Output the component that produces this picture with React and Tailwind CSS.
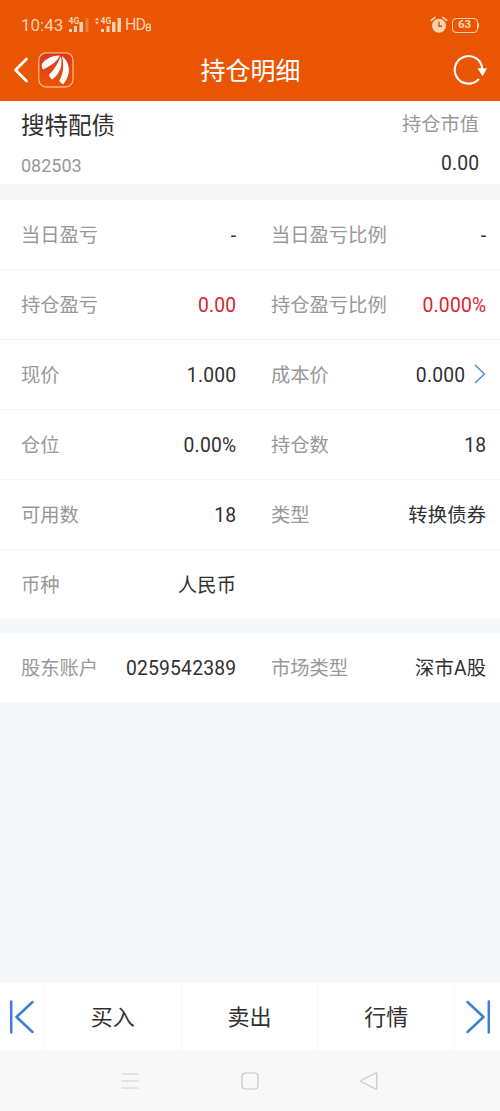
import React from 'react';
import clsx from 'clsx';

const rows = [
  [
    { label: '当日盈亏', value: '-' },
    { label: '当日盈亏比例', value: '-' },
  ],
  [
    { label: '持仓盈亏', value: '0.00', red: true },
    { label: '持仓盈亏比例', value: '0.000%', red: true },
  ],
  [
    { label: '现价', value: '1.000' },
    { label: '成本价', value: '0.000', link: true },
  ],
  [
    { label: '仓位', value: '0.00%' },
    { label: '持仓数', value: '18' },
  ],
  [
    { label: '可用数', value: '18' },
    { label: '类型', value: '转换债券' },
  ],
  [{ label: '币种', value: '人民币' }],
];

const accountRow = [
  { label: '股东账户', value: '0259542389' },
  { label: '市场类型', value: '深市A股' },
];

const StatusBar = () => (
  <div className="flex h-[50px] items-center justify-between pl-[21px] pr-[21px] text-[#ffd2b0]">
    <div className="flex items-center">
      <span className="w-[42px] text-[17px] leading-[20px]">10:43</span>
      <svg className="ml-[5px]" width="55" height="18" viewBox="0 0 55 18" fill="currentColor">
        <text x="0.5" y="7.5" fontSize="8.5" fontWeight="700">4G</text>
        <rect x="1" y="13" width="3" height="3" />
        <rect x="6" y="10" width="3" height="6" />
        <rect x="11.5" y="6" width="3.5" height="10" />
        <rect x="17.5" y="2" width="3" height="14" opacity="0.35" />
        <path d="M27 4.2l2-2.7 2 2.7zM27 5.8h4l-2 2.7z" />
        <text x="32.5" y="7.5" fontSize="8.5" fontWeight="700">4G</text>
        <rect x="33" y="13" width="3" height="3" />
        <rect x="38.5" y="10" width="3" height="6" />
        <rect x="44" y="6" width="3.5" height="10" />
        <rect x="49.5" y="2" width="3.5" height="14" />
      </svg>
      <span className="ml-[2px] text-[16px] leading-[20px] tracking-[-0.8px]">HD</span>
      <svg className="mt-[4px]" width="7" height="9" viewBox="0 0 7 9" fill="none" stroke="currentColor" strokeWidth="1.3">
        <rect x="1.4" y="1.2" width="3.8" height="6.5" rx="1" />
        <path d="M1.4 4.4h3.8" />
      </svg>
    </div>
    <div className="flex items-center">
      <svg className="mr-px" width="18" height="18" viewBox="0 0 18 18" fill="none" stroke="currentColor" strokeLinecap="round">
        <circle cx="9" cy="9.8" r="7" fill="currentColor" stroke="none" />
        <path d="M1.2 4.3l4-3M16.8 4.3l-4-3" strokeWidth="1.6" />
        <path d="M9 6.2v4h2.6" stroke="#ea5504" strokeWidth="1.5" />
      </svg>
      <div className="ml-[3px] flex h-[15px] w-[26px] items-center justify-center rounded-[4px] border border-current text-[11.5px] font-bold leading-none">
        63
      </div>
      <div className="h-[5px] w-[1.5px] rounded-r bg-current" />
    </div>
  </div>
);

const TitleBar = () => (
  <div className="flex h-[51px] items-start justify-between pl-[13px] pr-[12px] text-white">
    <div className="flex w-[66px] items-start">
      <svg className="mt-[6px]" width="17" height="28" viewBox="0 0 17 28" fill="none" stroke="currentColor" strokeWidth="2.8" strokeLinecap="round" strokeLinejoin="round">
        <path d="M13.5 3L2.5 14l11 11" />
      </svg>
      <svg className="ml-[8px] mt-[2px]" width="36" height="36" viewBox="0 0 36 36">
        <defs>
          <linearGradient id="logo" x1="0" y1="0" x2="0" y2="1">
            <stop offset="0" stopColor="#dc3520" />
            <stop offset="1" stopColor="#ea5504" />
          </linearGradient>
        </defs>
        <rect x="0.8" y="0.8" width="34.2" height="34.2" rx="7.5" fill="url(#logo)" stroke="#ffb37e" strokeWidth="1.3" />
        <g fill="#fff">
          <path d="M3.8 12C8 6.5 13.5 3.8 21.8 3.6C19 9.8 13.8 13.2 5 17.6C3.9 16 3.5 14 3.800 12Z" />
          <path d="M11 22.800C15.500 18.500 19.500 12.500 22.800 4.200C25.200 14 21.500 22 14.200 27.400C12.500 26.300 11.500 24.800 11 22.800Z" />
          <path d="M21.200 28.800C25.500 21.500 26.200 13.500 24 4C32.500 10.500 33.500 22.500 25.300 32.200C23.500 31.500 22.200 30.300 21.200 28.800Z" />
        </g>
      </svg>
    </div>
    <h1 className="mt-[4px] text-[25px] leading-[36px]">持仓明细</h1>
    <div className="flex w-[66px] justify-end">
      <svg className="mt-[3px]" width="36" height="34" viewBox="0 0 36 34" fill="none" stroke="currentColor" strokeWidth="2.1">
        <path d="M26.4 26.5A13.8 13.8 0 1 1 30.3 16" strokeLinecap="round" />
        <path d="M25.500 15.200h9.500l-4.400 8z" fill="currentColor" stroke="none" />
      </svg>
    </div>
  </div>
);

const Cell = ({ label, value, red, link }) => (
  <div className="flex w-1/2 items-center justify-between pl-[21px] pr-[14px] pt-[3px]">
    <span className="text-[#989898]">{label}</span>
    <span className={clsx('-mr-[0.3px] flex items-center tracking-[0.2px]', red ? 'text-[#d7262c]' : 'text-[#303030]')}>
      {value}
      {link && (
        <svg className="mb-[4px] ml-[9px]" width="12" height="20" viewBox="0 0 12 20" fill="none" stroke="#4a86d0" strokeWidth="1.4">
          <path d="M1 1l9.500 9L1 19" />
        </svg>
      )}
    </span>
  </div>
);

const Row = ({ cells, last }) => (
  <div className={clsx('flex bg-white text-[19.3px] leading-[28px]', last ? 'h-[69px]' : 'h-[70px] border-b border-[#f5f5f5]')}>
    {cells.map((cell) => (
      <Cell key={cell.label} {...cell} />
    ))}
  </div>
);

const EdgeArrow = ({ flip }) => (
  <svg className={clsx(flip && '-scale-x-100')} width="26" height="34" viewBox="0 0 26 34" fill="none" stroke="#3d7fd2" strokeWidth="2.5" strokeLinecap="round" strokeLinejoin="round">
    <path d="M2.2 1.5v31M23.5 2L7.5 17l16 15" />
  </svg>
);

const App = () => {
  return (
    <div className="flex h-[1111px] w-[500px] flex-col bg-[#f6f7f9] font-[Roboto,'Noto_Sans_CJK_SC',sans-serif]">
      <header className="h-[101px] bg-[#ea5504]">
        <StatusBar />
        <TitleBar />
      </header>

      <section className="flex h-[83px] justify-between bg-white pl-[21px] pr-[21px]">
        <div>
          <div className="mt-[8px] text-[23.5px] leading-[34px] text-[#303030]">搜特配债</div>
          <div className="mt-[10px] text-[18px] leading-[26px] text-[#989898]">082503</div>
        </div>
        <div className="text-right text-[19.3px] leading-[28px]">
          <div className="mt-[10px] text-[#989898]">持仓市值</div>
          <div className="-mr-[0.3px] mt-[11px] tracking-[0.2px] text-[#303030]">0.00</div>
        </div>
      </section>

      <div className="h-[16px] bg-[#f7f7f7]" />

      <section>
        {rows.map((cells, i) => (
          <Row key={cells[0].label} cells={cells} last={i === rows.length - 1} />
        ))}
      </section>

      <section className="mt-[14px]">
        <Row cells={accountRow} />
      </section>

      <footer className="mt-auto">
        <div className="flex h-[67px] divide-x divide-[#f7f7f7] bg-white text-[22px] text-[#303030]">
          <button className="flex w-[45px] items-center justify-center">
            <EdgeArrow />
          </button>
          <button className="flex-1 pt-[2px]">买入</button>
          <button className="flex-1 pt-[2px]">卖出</button>
          <button className="flex-1 pt-[2px]">行情</button>
          <button className="flex w-[45px] items-center justify-center">
            <EdgeArrow flip />
          </button>
        </div>
        <nav className="flex h-[61px] items-center justify-between bg-[#f8f8f8] pl-[121px] pr-[122px]">
          <svg width="18" height="18" viewBox="0 0 18 18" stroke="#cbcbcb" strokeWidth="1.2">
            <path d="M0.5 2h17M0.5 9h17M0.5 16h17" />
          </svg>
          <svg width="18" height="18" viewBox="0 0 18 18" fill="none" stroke="#c6c6c6" strokeWidth="1.2">
            <rect x="1" y="1" width="16" height="16" rx="3.5" />
          </svg>
          <svg width="18" height="18" viewBox="0 0 18 18" fill="none" stroke="#c6c6c6" strokeWidth="1.2" strokeLinejoin="round">
            <path d="M1.5 8.2L15.5 1q1.2-.5 1.2.8v14.4q0 1.3-1.2.8L1.5 9.8q-1-.8 0-1.6z" />
          </svg>
        </nav>
      </footer>
    </div>
  );
};

export default App;
